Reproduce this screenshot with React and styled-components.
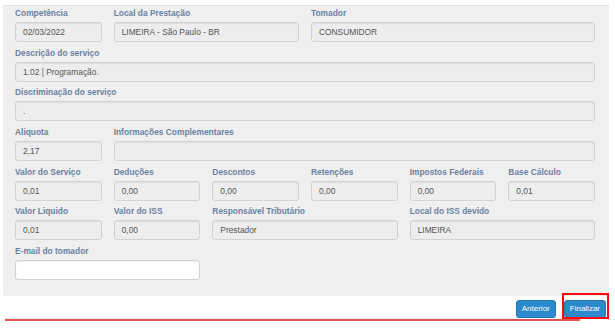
import React from "react";
import styled, { createGlobalStyle } from "styled-components";

const Global = createGlobalStyle`
  html, body { margin: 0; padding: 0; background: #fff; }
  body { font-family: "Liberation Sans", Arial, sans-serif; }
  * { box-sizing: border-box; }
`;

const Page = styled.div`
  width: 615px;
  height: 333px;
  padding: 5px 6px 0 3px;
  background: #fff;
`;

const Panel = styled.div`
  background: #efefef;
  border-top: 1px solid #e2e2e2;
  border-radius: 0 0 3px 3px;
  padding: 1px 14px 16px 12px;
`;

const Grid = styled.div`
  display: grid;
  grid-template-columns: repeat(6, 1fr);
  column-gap: 12px;
  row-gap: 4.7px;
`;

const Field = styled.div`
  grid-column: span ${(p) => p.span || 1};
  display: flex;
  flex-direction: column;
  min-width: 0;
`;

const Label = styled.label`
  font-size: 8.4px;
  line-height: 12px;
  height: 12px;
  font-weight: bold;
  color: #6a82a2;
  margin-bottom: 3px;
  white-space: nowrap;
`;

const Input = styled.div`
  height: 20px;
  border: 1px solid #d2d2d2;
  border-radius: 3px;
  background: ${(p) => (p.editable ? "#ffffff" : "#ededed")};
  box-shadow: inset 0 1px 1px rgba(0, 0, 0, 0.06);
  padding: 0 7px;
  font-size: 8.4px;
  line-height: 18px;
  color: #555;
  white-space: nowrap;
  overflow: hidden;
`;

const Footer = styled.div`
  position: relative;
  display: flex;
  justify-content: flex-end;
  gap: 8px;
  padding: 4px 3px 0 0;
`;

const Button = styled.button`
  height: 18px;
  padding: 0 5px;
  border: 1px solid #2378b0;
  border-radius: 3px;
  background: #2b8acb;
  color: #fff;
  font-family: "Liberation Sans", Arial, sans-serif;
  font-size: 8px;
  line-height: 16px;
  cursor: pointer;
`;

const Highlight = styled.div`
  position: absolute;
  left: 559px;
  top: -3px;
  width: 47px;
  height: 26px;
  border: 2px solid #ff0a0a;
  pointer-events: none;
`;

const Divider = styled.div`
  height: 1.5px;
  margin: 1px 29px 0 2px;
  background: #de5757;
  box-shadow: 0 -1px 1px rgba(0, 0, 0, 0.08);
`;

const fields = [
  { label: "Competência", value: "02/03/2022", span: 1 },
  { label: "Local da Prestação", value: "LIMEIRA - São Paulo - BR", span: 2 },
  { label: "Tomador", value: "CONSUMIDOR", span: 3 },
  { label: "Descrição do serviço", value: "1.02 | Programação.", span: 6 },
  { label: "Discriminação do serviço", value: ".", span: 6 },
  { label: "Aliquota", value: "2,17", span: 1 },
  { label: "Informações Complementares", value: "", span: 5 },
  { label: "Valor do Serviço", value: "0,01", span: 1 },
  { label: "Deduções", value: "0,00", span: 1 },
  { label: "Descontos", value: "0,00", span: 1 },
  { label: "Retenções", value: "0,00", span: 1 },
  { label: "Impostos Federais", value: "0,00", span: 1 },
  { label: "Base Cálculo", value: "0,01", span: 1 },
  { label: "Valor Liquido", value: "0,01", span: 1 },
  { label: "Valor do ISS", value: "0,00", span: 1 },
  { label: "Responsável Tributário", value: "Prestador", span: 2 },
  { label: "Local do ISS devido", value: "LIMEIRA", span: 2 },
  { label: "E-mail do tomador", value: "", span: 2, editable: true },
];

export default function App() {
  return (
    <>
      <Global />
      <Page>
        <Panel>
          <Grid>
            {fields.map((f) => (
              <Field key={f.label} span={f.span}>
                <Label>{f.label}</Label>
                <Input editable={f.editable}>{f.value}</Input>
              </Field>
            ))}
          </Grid>
        </Panel>
        <Footer>
          <Button>Anterior</Button>
          <Button>Finalizar</Button>
          <Highlight />
        </Footer>
        <Divider />
      </Page>
    </>
  );
}
